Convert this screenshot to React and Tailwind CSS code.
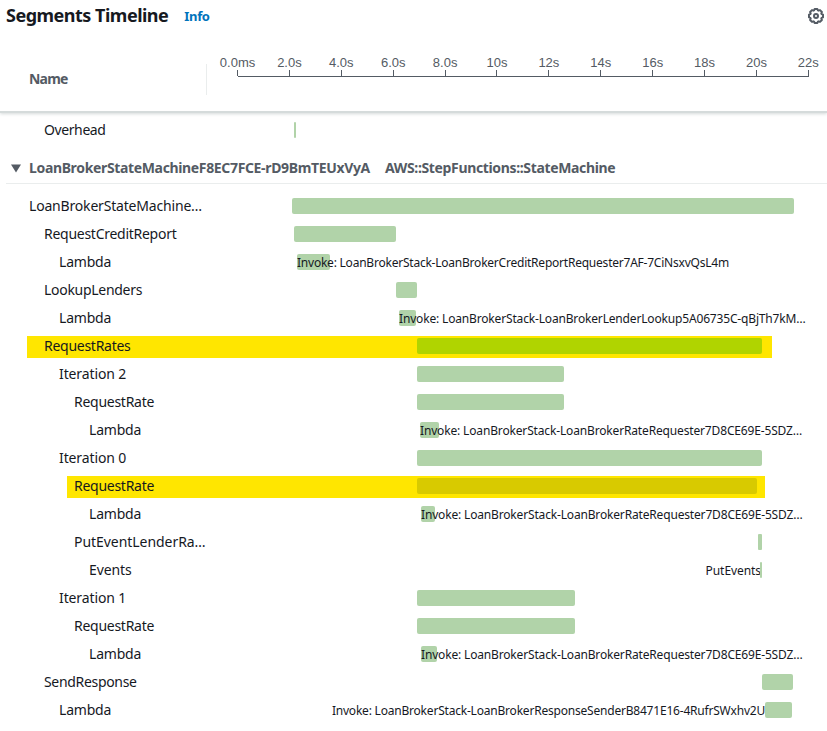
const TICKS = ["0.0ms", "2.0s", "4.0s", "6.0s", "8.0s", "10s", "12s", "14s", "16s", "18s", "20s", "22s"];

const ROWS = [
  { name: "LoanBrokerStateMachine…", indent: 29, spacing: "tracking-[-0.185px]", x: 292, w: 502 },
  { name: "RequestCreditReport", indent: 44, spacing: "tracking-[-0.27px]", x: 294, w: 102 },
  { name: "Lambda", indent: 59, spacing: "tracking-[-0.2px]", x: 297, w: 33, label: "Invoke: LoanBrokerStack-LoanBrokerCreditReportRequester7AF-7CiNsxvQsL4m", labelSpacing: "tracking-[-0.225px]" },
  { name: "LookupLenders", indent: 44, spacing: "tracking-[-0.29px]", x: 396, w: 21 },
  { name: "Lambda", indent: 59, spacing: "tracking-[-0.2px]", x: 399, w: 17, label: "Invoke: LoanBrokerStack-LoanBrokerLenderLookup5A06735C-qBjTh7kM…", labelSpacing: "tracking-[-0.165px]" },
  { name: "RequestRates", indent: 44, spacing: "tracking-[-0.27px]", x: 417, w: 345, color: "bg-[#b0d400]", highlight: "left-[27px] w-[745px]" },
  { name: "Iteration 2", indent: 59, spacing: "tracking-[-0.12px]", x: 417, w: 147 },
  { name: "RequestRate", indent: 74, spacing: "tracking-[-0.27px]", x: 417, w: 147 },
  { name: "Lambda", indent: 89, spacing: "tracking-[-0.2px]", x: 420, w: 19, label: "Invoke: LoanBrokerStack-LoanBrokerRateRequester7D8CE69E-5SDZ…", labelSpacing: "tracking-[-0.155px]" },
  { name: "Iteration 0", indent: 59, spacing: "tracking-[-0.12px]", x: 417, w: 345 },
  { name: "RequestRate", indent: 74, spacing: "tracking-[-0.27px]", x: 417, w: 340, color: "bg-[#d8ca00]", highlight: "left-[67px] w-[698px]" },
  { name: "Lambda", indent: 89, spacing: "tracking-[-0.2px]", x: 421, w: 14, label: "Invoke: LoanBrokerStack-LoanBrokerRateRequester7D8CE69E-5SDZ…", labelSpacing: "tracking-[-0.165px]" },
  { name: "PutEventLenderRa…", indent: 74, spacing: "tracking-[-0.05px]", x: 758, w: 4 },
  { name: "Events", indent: 89, spacing: "tracking-[-0.1px]", x: 760, w: 2, before: "PutEvents", labelSpacing: "-mr-px tracking-[-0.07px]" },
  { name: "Iteration 1", indent: 59, spacing: "tracking-[-0.12px]", x: 417, w: 158 },
  { name: "RequestRate", indent: 74, spacing: "tracking-[-0.27px]", x: 417, w: 158 },
  { name: "Lambda", indent: 89, spacing: "tracking-[-0.2px]", x: 421, w: 16, label: "Invoke: LoanBrokerStack-LoanBrokerRateRequester7D8CE69E-5SDZ…", labelSpacing: "tracking-[-0.165px]" },
  { name: "SendResponse", indent: 44, spacing: "tracking-[-0.32px]", x: 762, w: 31 },
  { name: "Lambda", indent: 59, spacing: "tracking-[-0.2px]", x: 765, w: 27, before: "Invoke: LoanBrokerStack-LoanBrokerResponseSenderB8471E16-4RufrSWxhv2U", labelSpacing: "tracking-[-0.205px]" },
];

function Row({ row }) {
  const narrow = row.w <= 4;
  return (
    <div className="relative flex h-7 items-center">
      {row.highlight && <div className={`absolute top-1 h-[22px] bg-[#ffe600] ${row.highlight}`} />}
      <div className="relative -mt-0.5 w-[207px] shrink-0 whitespace-nowrap" style={{ paddingLeft: row.indent }}>
        <span className={`text-sm leading-5 ${row.spacing}`}>{row.name}</span>
      </div>
      <div className="relative flex shrink-0 items-center justify-end whitespace-nowrap" style={{ width: row.x - 207 }}>
        {row.before && <span className={`mt-0.5 text-xs leading-4 ${row.labelSpacing}`}>{row.before}</span>}
      </div>
      <div
        className={`relative flex h-4 shrink-0 items-center whitespace-nowrap ${narrow ? "rounded-[1px]" : "rounded-[2px]"} ${row.color || "bg-[#b1d3a9]"}`}
        style={{ width: row.w }}
      >
        {row.label && <span className={`mt-0.5 text-xs leading-4 ${row.labelSpacing}`}>{row.label}</span>}
      </div>
    </div>
  );
}

function Gear() {
  return (
    <svg className="size-4" viewBox="0 0 16 16" fill="none" stroke="#545b64" strokeWidth="2" strokeLinejoin="round">
      <path d="M6.600 1h2.800l.5 1.400.7.300L12 2.100 13.900 4l-.6 1.400.3.700 1.400.5v2.800l-1.400.5-.3.700.6 1.400L12 13.900l-1.400-.6-.7.300L9.400 15H6.600l-.5-1.400-.7-.300L4 13.900 2.100 12l.6-1.400-.3-.700L1 9.400V6.600l1.400-.5.3-.700L2.100 4 4 2.100l1.400.6.7-.300z" />
      <circle cx="8" cy="8" r="2" />
    </svg>
  );
}

export default function App() {
  return (
    <div className="flex h-[731px] w-[827px] flex-col overflow-hidden bg-white font-['Noto_Sans','Open_Sans',sans-serif] text-[#16191f]">
      <header className="relative flex h-[111px] shrink-0 flex-col shadow-[0_2px_0_0_#d5dbdb,0_3px_3px_0_#d5dbdb]">
        <div className="flex h-8 items-center pl-[6px] pr-[3px]">
          <h1 className="-mt-[3px] text-lg leading-[22px] font-bold tracking-[-0.5px]">Segments Timeline</h1>
          <a className="ml-4 text-[13px] leading-5 font-bold tracking-[-0.35px] text-[#0073bb]">Info</a>
          <div className="ml-auto">
            <Gear />
          </div>
        </div>
        <div className="mt-8 flex h-[31px] text-[#545b64]">
          <div className="flex w-[207px] shrink-0 items-center border-r border-[#eaeded] pl-[29px]">
            <span className="-mt-0.5 text-sm leading-5 font-bold tracking-[-0.8px]">Name</span>
          </div>
          <div className="-mt-2 ml-[4.6px] flex">
            {TICKS.map((t, i) => (
              <div key={t} className="flex w-[51.9px] flex-col items-center">
                <span className="h-[14px] font-['Liberation_Sans',Arial,sans-serif] text-[13px] leading-[14px]">{t}</span>
                <div className="h-1.5 w-px bg-[#545b64]" />
                <div className={`h-px bg-[#545b64] ${i === 0 ? "ml-[26px] w-[26px]" : i === 11 ? "mr-[26px] w-[27px]" : "w-full"}`} />
              </div>
            ))}
          </div>
        </div>
      </header>

      <main className="flex flex-col">
        <div className="mt-[5px]">
          <Row row={{ name: "Overhead", indent: 44, spacing: "tracking-[-0.4px]", x: 294, w: 2 }} />
        </div>
        <div className="ml-1.5 mt-[9px] flex h-[31px] items-center border-b border-[#eaeded] text-sm leading-5 font-bold text-[#545b64]">
          <svg className="ml-[5px] h-[9px] w-[10px]" viewBox="0 0 10 9">
            <path d="M0 .5h10L5 8.500z" fill="#545b64" />
          </svg>
          <span className="ml-2 w-[356px] whitespace-nowrap tracking-[-0.35px]">LoanBrokerStateMachineF8EC7FCE-rD9BmTEUxVyA</span>
          <span className="whitespace-nowrap tracking-[-0.35px]">AWS::StepFunctions::StateMachine</span>
        </div>
        <div className="mt-2">
          {ROWS.map((row, i) => (
            <Row key={i} row={row} />
          ))}
        </div>
      </main>
    </div>
  );
}
